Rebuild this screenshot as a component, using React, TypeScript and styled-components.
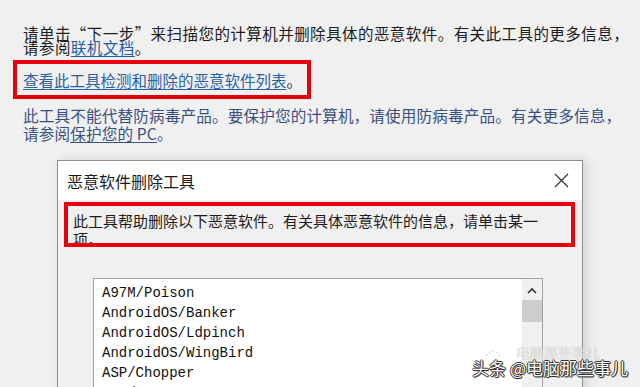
import * as React from "react";
import styled, {createGlobalStyle} from "styled-components";

const GlobalStyle = createGlobalStyle`
  html, body {
    margin: 0;
    padding: 0;
    background: #f0f0f0;
  }
`

const cjk = `"Noto Sans CJK SC", "Noto Sans", sans-serif`

const Page = styled.div`
  position: relative;
  width: 640px;
  height: 387px;
  overflow: hidden;
  box-sizing: border-box;
  padding-top: 26px;
  background: #f0f0f0;
  font-family: ${cjk};
  display: flex;
  flex-direction: column;

  & > * {
    flex-shrink: 0;
  }
`

const Intro = styled.p`
  margin: 0 0 0 23px;
  font-size: 15.5px;
  line-height: 14px;
  letter-spacing: 0.45px;
  color: #1c1c1c;
  white-space: nowrap;
`

const Link = styled.a<{ $color?: string }>`
  color: ${({$color}) => $color || "#1f5ea6"};
  text-decoration: underline;
  text-underline-offset: 2px;
  text-decoration-thickness: 1px;
`

const Highlight = styled.div<{ $width: number, $height: number }>`
  width: ${({$width}) => $width}px;
  height: ${({$height}) => $height}px;
  flex-shrink: 0;
  box-sizing: border-box;
  border: 4px solid #e8000b;
  overflow: hidden;
`

const TopHighlight = styled(Highlight)`
  margin: 6px 0 0 13px;
  display: flex;
  align-items: center;
  padding-left: 6px;
  font-size: 15.5px;
  color: #1c1c1c;
  white-space: nowrap;
`

const Note = styled.p`
  margin: 7px 0 0 23px;
  font-size: 15.6px;
  line-height: 18px;
  letter-spacing: 0.15px;
  color: #3a5083;
  white-space: nowrap;
`

const Dialog = styled.div`
  margin: 18px 0 0 57px;
  width: 526px;
  height: 240px;
  box-sizing: border-box;
  border: 1px solid #8e8e8e;
  border-bottom: none;
  background: #f0f0f0;
  box-shadow: 4px 0 10px rgba(0, 0, 0, 0.12);
  display: flex;
  flex-direction: column;
`

const TitleBar = styled.div`
  height: 39px;
  flex-shrink: 0;
  background: #ffffff;
  display: flex;
  align-items: center;
  justify-content: space-between;
  padding: 0 13px 0 9px;
  font-size: 16px;
  color: #1a1a1a;
`

const CloseIcon = styled.svg`
  width: 15px;
  height: 15px;
`

const Body = styled.div`
  padding: 2px 0 0 6px;
  display: flex;
  flex-direction: column;

  & > * {
    flex-shrink: 0;
  }
`

const DialogHighlight = styled(Highlight)`
  padding: 6px 0 0 5px;
  font-size: 15px;
  line-height: 18px;
  color: #1c1c1c;
  white-space: nowrap;
`

const ListBox = styled.div`
  margin: 31px 0 0 29px;
  width: 450px;
  height: 140px;
  box-sizing: border-box;
  border: 1px solid #a3a3a3;
  background: #ffffff;
  display: flex;
`

const Items = styled.div`
  flex: 1;
  padding: 4px 0 0 8px;
  font-family: "Liberation Mono", "DejaVu Sans Mono", monospace;
  font-size: 14px;
  line-height: 20px;
  color: #111111;
`

const ScrollTrack = styled.div`
  width: 20px;
  background: #f0f0f0;
  display: flex;
  flex-direction: column;
  align-items: center;
`

const ScrollArrow = styled.svg`
  margin-top: 8px;
  width: 10px;
  height: 7px;
`

const ScrollThumb = styled.div`
  margin-top: 6px;
  width: 20px;
  height: 22px;
  background: #cdcdcd;
`

const Watermark = styled.div`
  position: absolute;
  right: 12px;
  bottom: 8px;
  font-family: ${cjk};
  font-size: 17px;
  line-height: 22px;
  color: #ffffff;
  text-shadow: 1px 0 0 #333, -1px 0 0 #333, 0 1px 0 #333, 0 -1px 0 #333, 1px 1px 1px #444;
  white-space: nowrap;
`

const WatermarkShadow = styled.div`
  position: absolute;
  right: 40px;
  bottom: 25px;
  display: flex;
  align-items: center;
  gap: 14px;
  font-family: ${cjk};
  font-size: 14px;
  color: rgba(255, 255, 255, 0.6);
  text-shadow: 0 0 1px #b0b0b0;
`

const malware = [
    "A97M/Poison",
    "AndroidOS/Banker",
    "AndroidOS/Ldpinch",
    "AndroidOS/WingBird",
    "ASP/Chopper",
    "ASP/Ace",
]

export default function App() {
    return <>
        <GlobalStyle/>
        <Page>
            <Intro>
                请单击“下一步”来扫描您的计算机并删除具体的恶意软件。有关此工具的更多信息，<br/>
                请参阅<Link>联机文档</Link>。
            </Intro>
            <TopHighlight $width={298} $height={39}>
                <Link $color="#2a62a6">查看此工具检测和删除的恶意软件列表</Link>。
            </TopHighlight>
            <Note>
                此工具不能代替防病毒产品。要保护您的计算机，请使用防病毒产品。有关更多信息，<br/>
                请参阅<Link $color="#3a5083">保护您的 PC</Link>。
            </Note>
            <Dialog>
                <TitleBar>
                    恶意软件删除工具
                    <CloseIcon viewBox="0 0 15 15">
                        <path d="M1 1L14 14M14 1L1 14" stroke="#333" strokeWidth={1.2} fill="none"/>
                    </CloseIcon>
                </TitleBar>
                <Body>
                    <DialogHighlight $width={511} $height={45}>
                        此工具帮助删除以下恶意软件。有关具体恶意软件的信息，请单击某一<br/>
                        项。
                    </DialogHighlight>
                    <ListBox>
                        <Items>
                            {malware.map(name => <div key={name}>{name}</div>)}
                        </Items>
                        <ScrollTrack>
                            <ScrollArrow viewBox="0 0 10 7">
                                <path d="M1 6L5 2L9 6" stroke="#333" strokeWidth={1.6} fill="none"/>
                            </ScrollArrow>
                            <ScrollThumb/>
                        </ScrollTrack>
                    </ListBox>
                </Body>
            </Dialog>
            <WatermarkShadow>
                <svg width={18} height={12} viewBox="0 0 18 12">
                    <path d="M2 10Q9 0 16 10" stroke="#c8c8c8" strokeWidth={1} strokeDasharray="2 2" fill="none"/>
                </svg>
                电脑那些事儿
            </WatermarkShadow>
            <Watermark>头条 @电脑那些事儿</Watermark>
        </Page>
    </>
}
